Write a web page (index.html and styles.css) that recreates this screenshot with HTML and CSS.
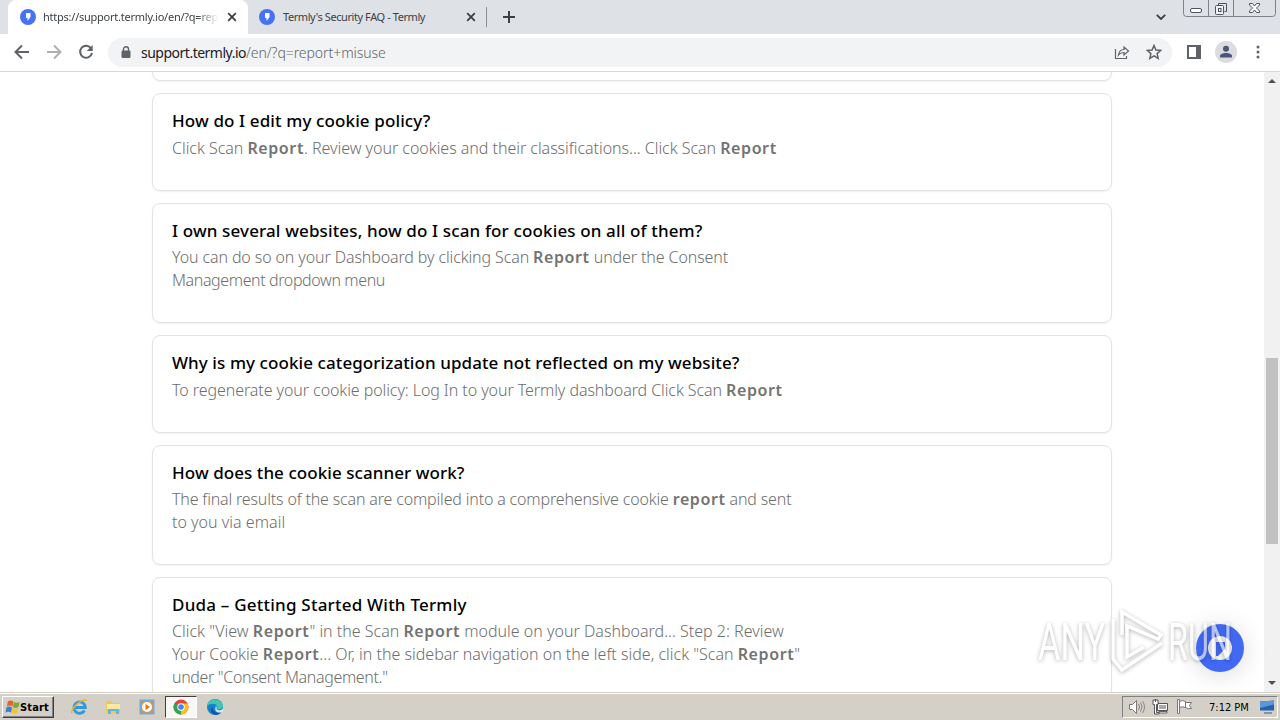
FILE: index.html
```
<!DOCTYPE html>
<html lang="en">
<head>
<meta charset="utf-8">
<title>Termly support</title>
<link rel="stylesheet" href="styles.css">
</head>
<body>
<div class="screen">
  <header class="tabstrip">
    <div class="tab active">
      <svg class="fav" viewBox="0 0 16 16"><circle cx="8" cy="8" r="8" fill="#4672f5"/><path d="M6 4h4.500v4L7.500 12V9H6z" fill="#fff"/></svg>
      <span class="tabtext fade">https://support.termly.io/en/?q=rep</span>
      <svg class="x" viewBox="0 0 10 10"><path d="M1.200 1.200l7.600 7.600M8.800 1.200l-7.600 7.600"/></svg>
    </div>
    <div class="tab">
      <svg class="fav" viewBox="0 0 16 16"><circle cx="8" cy="8" r="8" fill="#4672f5"/><path d="M6 4h4.500v4L7.500 12V9H6z" fill="#fff"/></svg>
      <span class="tabtext second">Termly's Security FAQ - Termly</span>
      <svg class="x" viewBox="0 0 10 10"><path d="M1.200 1.200l7.600 7.600M8.800 1.200l-7.600 7.600"/></svg>
    </div>
    <div class="divider"></div>
    <svg class="plus" viewBox="0 0 12 12"><path d="M6 0v12M0 6h12"/></svg>
    <svg class="chevron" viewBox="0 0 10 6"><path d="M.8.8L5 5 9.200.8"/></svg>
    <svg class="winctl" viewBox="0 0 94 18" fill="none"><path d="M.5 0v13.500q0 3 3 3h86q3 0 3-3V0M25.500 0v16M50.500 0v16" stroke="#7e828b"/><g stroke="#50545e"><rect x="7.500" y="8.500" width="11" height="4" rx="1.500" fill="#fff"/><path d="M35.500 5.500v-2h8v8h-2"/><rect x="32.500" y="5.500" width="8" height="9" rx="1" fill="#eef0f3"/><rect x="35.500" y="8.500" width="2.500" height="3"/><path d="M66.500 3.500h3l2 2.500 2-2.500h3v1.500l-3 3 3 3v1.500h-3l-2-2.500-2 2.500h-3V11l3-3-3-3z" fill="#fff"/></g></svg>
  </header>
  <nav class="toolbar">
    <svg class="navicon" viewBox="0 0 16 16"><path d="M15 8H2M8 1.500L1.500 8 8 14.500"/></svg>
    <svg class="navicon dim" viewBox="0 0 16 16"><path d="M1 8h13M8 1.500L14.500 8 8 14.500"/></svg>
    <svg class="navicon" viewBox="0 0 16 16"><path d="M13.200 4.500A6 6 0 1 0 14 9"/><path d="M14.700 1v6H8.700z" fill="#5f6368" stroke="none"/></svg>
    <div class="omnibox">
      <svg class="lock" viewBox="0 0 10 12"><rect x=".5" y="4.500" width="9" height="7.500" rx="1.200" fill="#5f6368"/><path d="M2.500 5V3.200a2.500 2.500 0 0 1 5 0V5" fill="none" stroke="#5f6368" stroke-width="1.400"/></svg>
      <span class="url"><b>support.termly.io</b>/en/?q=report+misuse</span>
      <svg class="share" viewBox="0 0 16 16"><path d="M1.500 5v9.500h11V12M4.500 11c.5-4 2.500-5.500 5.500-5.500V3l4.500 4-4.500 4V8.500c-2.500 0-4 .500-5.500 2.500z"/></svg>
      <svg class="star" viewBox="0 0 16 16"><path d="M8 1.500l1.900 4.500 4.900.400-3.700 3.200 1.100 4.800L8 11.900l-4.200 2.500 1.100-4.800L1.200 6.400l4.900-.4z"/></svg>
    </div>
    <svg class="panel" viewBox="0 0 14 14"><path d="M1 1h12v12H1z" fill="none" stroke="#5f6368" stroke-width="2"/><path d="M9 1h4v12H9z" fill="#5f6368"/></svg>
    <svg class="avatar" viewBox="0 0 22 22"><circle cx="11" cy="11" r="11" fill="#dadce0"/><circle cx="11" cy="7.800" r="3" fill="#4a5776"/><path d="M5 16.500v-1.500c0-2 3-3 6-3s6 1 6 3v1.500z" fill="#4a5776"/></svg>
    <svg class="dots" viewBox="0 0 4 14"><circle cx="2" cy="2" r="1.500"/><circle cx="2" cy="7" r="1.500"/><circle cx="2" cy="12" r="1.500"/></svg>
  </nav>
  <main class="view">
    <div class="results">
      <article class="card previous"></article>
      <article class="card edit">
        <h2>How do I edit my cookie policy?</h2>
        <p>Click Scan <b>Report</b>. Review your cookies and their classifications... Click Scan <b>Report</b></p>
      </article>
      <article class="card several">
        <h2>I own several websites, how do I scan for cookies on all of them?</h2>
        <p>You can do so on your Dashboard by clicking Scan <b>Report</b> under the Consent<br><span class="tail">Management dropdown menu</span></p>
      </article>
      <article class="card category">
        <h2>Why is my cookie categorization update not reflected on my website?</h2>
        <p>To regenerate your cookie policy: Log In to your Termly dashboard Click Scan <b>Report</b></p>
      </article>
      <article class="card scanner">
        <h2>How does the cookie scanner work?</h2>
        <p>The final results of the scan are compiled into a comprehensive cookie <b>report</b> and sent<br><span class="tail">to you via email</span></p>
      </article>
      <article class="card duda">
        <h2>Duda – Getting Started With Termly</h2>
        <p>Click "View <b>Report</b>" in the Scan <b>Report</b> module on your Dashboard... Step 2: Review<br>Your Cookie <b>Report</b>... Or, in the sidebar navigation on the left side, click "Scan <b>Report</b>"<br><span class="tail">under "Consent Management."</span></p>
      </article>
    </div>
    <aside class="scrollbar"><i class="up"></i><i class="thumb"></i><i class="down"></i></aside>
    <div class="chat"><svg viewBox="0 0 48 48"><circle cx="24" cy="24" r="12" fill="#f1f1ee"/><path d="M20 18h9v7l-7 7h-2z" fill="#4269f4"/></svg></div>
    <svg class="watermark" viewBox="0 0 210 72"><text x="3" y="53" textLength="67" lengthAdjust="spacingAndGlyphs">ANY</text><text x="133" y="53" textLength="64" lengthAdjust="spacingAndGlyphs">RUN</text><path d="M78 12V52L87 63 127 36M87 28V5L126 28 123 32 92 19V50L109 40" fill="none" stroke="#fff" stroke-width="3.500"/></svg>
  </main>
  <footer class="taskbar">
    <div class="start"><svg viewBox="0 0 16 16"><path d="M3 2q3-2 6 0L8 7.500Q5 5.500 2 7.500z" fill="#e8602c"/><path d="M9.500 2.500q3 2 6 0L14.500 8q-3 2-6 0z" fill="#77ad35"/><path d="M1.500 8.500q3-2 6 0l-1 5.500q-3-2-6 0z" fill="#3e80d0"/><path d="M8 9q3 2 6 0l-1 5.500q-3 2-6 0z" fill="#f6c32b"/></svg><span>Start</span></div>
    <svg class="app" viewBox="0 0 18 18"><path d="M14.500 12.500A5.700 5.700 0 1 1 15.300 9.500H5" fill="none" stroke="#2f9ade" stroke-width="2.800"/><path d="M2 15.500C0 11 12 0 17 2.500" fill="none" stroke="#e5b43c" stroke-width="1.500"/></svg>
    <svg class="app" viewBox="0 0 18 18"><path d="M2 3h5l1 2h8v10H2z" fill="#edc65c"/><path d="M3 6h13v5H3z" fill="#f9e9a3"/><path d="M4 16v-5h11v5h-3v-3H7v3z" fill="#6bb2d7"/></svg>
    <svg class="app" viewBox="0 0 18 18"><path d="M1.500 1.500h15v15h-15z" fill="#73a9dc"/><path d="M3.500 3.500h11v11h-11z" fill="#f58a20"/><circle cx="9" cy="9" r="5" fill="#fff"/><path d="M7.500 6l4.500 3-4.500 3z" fill="#ef6d12"/></svg>
    <div class="current"><svg class="app" viewBox="0 0 18 18"><circle cx="9" cy="9" r="7.500" fill="#e54335"/><path d="M9 9L2.500 5.300A7.500 7.500 0 0 0 9 16.500z" fill="#34a352"/><path d="M9 9V16.500A7.500 7.500 0 0 0 15.500 5.500H9z" fill="#fbc116"/><circle cx="9" cy="9" r="3.700" fill="#fff"/><circle cx="9" cy="9" r="2.800" fill="#4285f4"/></svg></div>
    <svg class="app edge" viewBox="0 0 18 18"><circle cx="9" cy="9" r="8" fill="#1482cf"/><path d="M1 8C2 0 14-1 17 7c0 4-3 5-6 4 2-5-5-7-10-3z" fill="#43c7ae"/><path d="M7 9c-1 4 3 7 8 5 1 0-1 2-4 3C5 17 3 11 7 9z" fill="#1556a3"/><path d="M10 8c2 2-1 3 2 4 3 1 5-1 5-2v4c-7 2-9-2-7-6z" fill="#d8e7e9"/></svg>
    <div class="tray">
      <svg viewBox="0 0 17 16" class="ti"><path d="M1.500 5.500h3l4-4v13l-4-4h-3z" fill="#fff" stroke="#777"/><path d="M10.500 5q2 3 0 6M12.500 3.500q3 4.500 0 9M14.500 2q4 6 0 12" fill="none" stroke="#888"/></svg>
      <svg viewBox="0 0 17 16" class="ti"><path d="M5.500 4.500h10v7h-10z" fill="#aaa" stroke="#555"/><path d="M6.500 5.500h8v5h-8z" fill="none" stroke="#fff"/><path d="M7 14h8v-1.500H7z" fill="#fff" stroke="#666"/><path d="M1 1h5v4.500H4.500v8H7V15H2.500V5.500H1z" fill="#fff" stroke="#555"/><path d="M3.500 0v3" stroke="#555"/></svg>
      <svg viewBox="0 0 17 16" class="ti"><path d="M1.500.500h2v14h-2zM3.500 2.500q3-2 6 0v6q-3-1.500-6 0zM9.500 3.500h6l-2 3 2 3q-3 1-6-1z" fill="#fff" stroke="#777"/></svg>
      <span class="clock">7:12 PM</span>
      <svg viewBox="0 0 17 16" class="ti desk"><path d="M1 2.500l14-1v10H1z" fill="#2560ae"/><path d="M1 2.500l14-1v4L1 9z" fill="#5b96da"/><path d="M5 14h8" stroke="#8193a8" stroke-width="2"/></svg>
    </div>
  </footer>
</div>
</body>
</html>
```
FILE: styles.css
```
* { box-sizing: border-box; }
body { margin: 0; overflow: hidden; font-family: "Noto Sans", sans-serif; background: #fff; }
svg { display: block; flex: none; }
.screen { width: 1280px; height: 720px; display: flex; flex-direction: column; overflow: hidden; }
.tabstrip { height: 34px; flex: none; display: flex; align-items: center; background: #dee1e6; padding-left: 8px; }
.tab { width: 239px; height: 34px; display: flex; align-items: center; padding: 0 11px 0 11px; }
.tab.active { width: 240px; padding-left: 12px; background: #fff; border-radius: 8px 8px 0 0; }
.fav { width: 16px; height: 16px; }
.tabtext { margin-left: 7px; width: 176px; flex: none; white-space: nowrap; font-size: 11px; line-height: 16px; letter-spacing: -.24px; color: #3c4043; }
.second { margin-left: 8px; width: 175px; letter-spacing: -.42px; }
.fade { -webkit-mask-image: linear-gradient(90deg, #000 87%, transparent); mask-image: linear-gradient(90deg, #000 87%, transparent); }
.x { width: 10px; height: 10px; margin-left: auto; fill: none; stroke: #3c4043; stroke-width: 1.8; }
.divider { width: 1px; height: 20px; background: #8a8d92; margin-left: -1px; }
.plus { width: 12px; height: 12px; margin-left: 16px; stroke: #3c4043; stroke-width: 2; }
.chevron { width: 10px; height: 6px; margin-left: auto; fill: none; stroke: #3c4043; stroke-width: 1.8; }
.winctl { width: 94px; height: 18px; margin: 0 3px 0 17px; align-self: flex-start; }
.toolbar { height: 38px; flex: none; display: flex; align-items: center; padding: 0 0 1px 14px; border-bottom: 1px solid #d5d7da; }
.navicon { width: 16px; height: 16px; margin-right: 16px; fill: none; stroke: #5f6368; stroke-width: 2; }
.navicon.dim { opacity: .5; }
.omnibox { width: 1064px; height: 29px; margin-left: -2px; border-radius: 15px; background: #f1f3f4; display: flex; align-items: center; padding: 0 10px 0 13px; }
.lock { width: 10px; height: 12px; }
.url { margin-left: 10px; font-size: 14px; font-weight: 300; letter-spacing: -.06px; color: #5f6368; white-space: nowrap; }
.url b { font-weight: 400; letter-spacing: -.5px; color: #202124; }
.share, .star { width: 16px; height: 16px; fill: none; stroke: #5f6368; stroke-width: 1.2; }
.share { margin-left: auto; }
.star { margin-left: 16px; stroke-width: 1.5; }
.panel { width: 14px; height: 14px; margin-left: 15px; }
.avatar { width: 22px; height: 22px; margin-left: 14px; }
.dots { width: 4px; height: 14px; margin-left: 19px; fill: #5f6368; }
.view { height: 620px; flex: none; position: relative; display: flex; overflow: hidden; }
.results { width: 1264px; padding-left: 152px; display: flex; flex-direction: column; gap: 12px; }
.card { width: 960px; flex: none; padding: 15px 19px 30.4px; border: 1px solid #e3e3e3; border-radius: 8px; box-shadow: 0 1px 2px rgba(0,0,0,.06); }
.previous { height: 59px; margin-top: -50px; }
h2 { margin: 0 0 4px; font-size: 17px; line-height: 24px; font-weight: 500; color: #000; white-space: nowrap; }
p { margin: 0; font-size: 16px; line-height: 22.4px; font-weight: 300; color: #6d6d6d; white-space: nowrap; }
p b { font-weight: 600; letter-spacing: .6px; color: #737373; }
.several p, .scanner p, .duda p { margin: -.8px 0 0; line-height: 22.8px; }
.several h2, .scanner h2, .duda h2 { margin-bottom: 4px; }
.edit h2 { letter-spacing: .12px; }
.edit p { letter-spacing: -.03px; }
.several h2 { letter-spacing: .135px; }
.several p { letter-spacing: -.113px; }
.several .tail { letter-spacing: -.388px; }
.category h2 { letter-spacing: .08px; }
.category p { letter-spacing: -.075px; }
.scanner h2 { letter-spacing: .06px; }
.scanner p { letter-spacing: -.165px; }
.scanner .tail { letter-spacing: .02px; }
.duda h2 { letter-spacing: .22px; }
.duda p { letter-spacing: .006px; }
.duda .tail { letter-spacing: -.35px; }
.scrollbar { width: 16px; height: 620px; background: #f1f1f1; display: flex; flex-direction: column; align-items: center; padding: 7px 0; }
.up, .down { border: 4px solid transparent; border-top: 0; border-bottom: 4px solid #505050; }
.down { border-top: 4px solid #505050; border-bottom: 0; margin-top: auto; }
.thumb { width: 12px; height: 186px; background: #c1c1c1; margin-top: 275px; }
.chat { position: absolute; left: 1196px; top: 552px; width: 48px; height: 48px; border-radius: 50%; background: #4269f4; box-shadow: 0 3px 26px rgba(0,0,0,.15); }
.watermark { position: absolute; left: 1035px; top: 535px; width: 210px; height: 72px; overflow: visible; filter: drop-shadow(0 1px 2px rgba(0,0,0,.5)); opacity: .6; }
.watermark text { font-family: Roboto, sans-serif; font-size: 52px; fill: #fff; }
.taskbar { height: 28px; flex: none; display: flex; align-items: center; background: #d4d0c8; border-top: 1px solid #d4d0c8; box-shadow: inset 0 1px #fff; padding: 1px 2px 0; font-family: "DejaVu Sans Condensed", "DejaVu Sans", sans-serif; }
.start { width: 52px; height: 22px; display: flex; align-items: center; padding: 0 2px; font-size: 11px; font-weight: 700; letter-spacing: .15px; border: 1px solid; border-color: #fff #404040 #404040 #fff; box-shadow: inset -1px -1px #808080; }
.start svg { width: 15px; height: 16px; }
.app { width: 18px; height: 18px; margin-left: 16px; }
.current { width: 32px; height: 22px; margin-left: 9px; padding: 1px 6px; background: #f8f7f5; border: 1px solid; border-color: #404040 #fff #fff #404040; }
.current .app { margin: 0; }
.edge { margin-left: 9px; }
.tray { width: 156px; height: 22px; margin-left: auto; display: flex; align-items: center; padding-left: 5px; border: 1px solid; border-color: #808080 #fff #fff #808080; font-size: 11px; white-space: nowrap; }
.ti { width: 17px; height: 16px; margin-right: 7px; }
.clock { margin-left: 9px; }
.desk { margin: 0 0 0 10px; }
```
